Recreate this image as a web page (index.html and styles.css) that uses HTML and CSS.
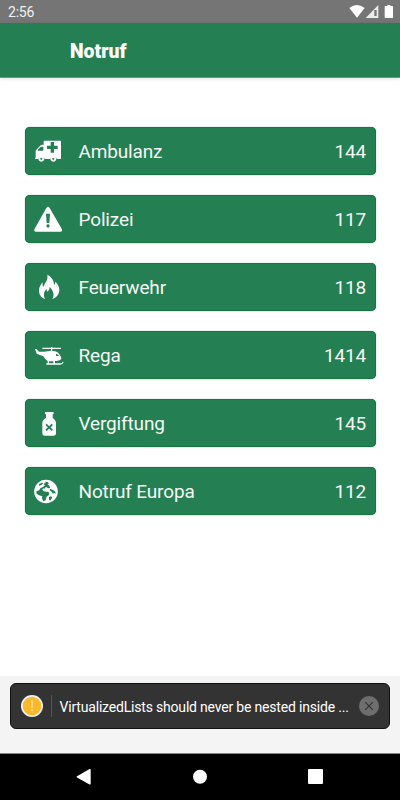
FILE: index.html
```
<!DOCTYPE html>
<html lang="de">
<head>
<meta charset="utf-8">
<title>Notruf</title>
<link rel="stylesheet" href="styles.css">
</head>
<body>
<div class="statusbar">
  <span class="clock">2:56</span>
  <svg class="status-icons" width="50" height="23" viewBox="440 0 150 69" fill="#fff">
    <path d="M447 24Q470 6 493 24L470 53Z"/>
    <path d="M534 15V54H496Z" fill="#ececec"/><path d="M522 30H529V48H522Z" fill="#757575"/>
    <path d="M561 15H570V18H576Q578 18 578 20V52Q578 54 576 54H555Q553 54 553 52V20Q553 18 555 18H561Z"/>
  </svg>
</div>
<header class="header"><h1>Notruf</h1></header>
<main class="list">
  <div class="row">
    <svg class="icon" viewBox="15 21 120 144">
      <path fill-rule="evenodd" d="M73 62H121Q123 62 123 64V115Q123 117 121 117H111A11 11 0 0 0 90 117H75A11 11 0 0 0 54 117H47Q45 117 45 115L47 112V94Q47 91 49 89L62 76Q64 74 67 74H71V64Q71 62 73 62ZM54 92H70V80H65Q63 80 61 82L54 89ZM92 66V77H81V87H92V98H102V87H113V77H102V66Z"/>
      <path fill-rule="evenodd" d="M64 107A9 9 0 1 0 64.100 107ZM64 113A3 3 0 1 1 63.900 113ZM100 107A9 9 0 1 0 100.100 107ZM100 113A3 3 0 1 1 99.900 113Z"/>
    </svg>
    <span class="name">Ambulanz</span><span class="number">144</span>
  </div>
  <div class="row">
    <svg class="icon" viewBox="15 21 120 144">
      <path fill-rule="evenodd" d="M79 60Q84 53 89 60L125 122Q129 130 121 131H48Q40 130 44 122ZM78 77L80 105H88L90 77ZM84 109A5 5 0 1 0 84.100 109Z"/>
    </svg>
    <span class="name">Polizei</span><span class="number">117</span>
  </div>
  <div class="row">
    <svg class="icon" viewBox="15 21 120 144">
      <path d="M82 56C96 64 102 73 102 87Q106 84 106 77C113 83 118 92 118 101C118 115 109 125 97 129C104 117 101 106 89 92C89 99 86 103 83 107Q79 104 80 98C71 107 70 117 75 129C64 125 57 116 57 104C57 93 62 86 68 79Q66 88 70 93C74 80 85 74 82 56Z"/>
    </svg>
    <span class="name">Feuerwehr</span><span class="number">118</span>
  </div>
  <div class="row">
    <svg class="icon" viewBox="15 21 120 144">
      <path fill-rule="evenodd" d="M67 71H93V69H97V71H123V75H97V81H102Q113 82 121 95Q126 101 123 106Q120 110 111 111H105V118H121Q126 118 128 113L131 115Q128 122 121 122H79V118H83V111Q75 107 70 97L50 89L45 75H49L57 83L73 83L93 80V75H67ZM108 89V96H117Q113 90 108 89ZM87 112V118H100V112Z"/>
    </svg>
    <span class="name">Rega</span><span class="number">1414</span>
  </div>
  <div class="row">
    <svg class="icon" viewBox="15 21 120 144">
      <path d="M77 60H99Q101 60 101 62V65Q101 67 98 67V77L104 83Q108 87 108 92V123Q108 131 100 131H75Q67 131 67 123V92Q67 87 71 83L78 77V67Q75 67 75 65V62Q75 60 77 60Z"/>
      <path class="mark" d="M78 97L97 115M97 97L78 115"/>
    </svg>
    <span class="name">Vergiftung</span><span class="number">145</span>
  </div>
  <div class="row">
    <svg class="icon" viewBox="15 21 120 144">
      <circle cx="78" cy="94.500" r="35.500"/>
      <path class="land" d="M75 65L83 66L87 71L82 73L87 76L91 84L84 85L78 80L73 87L66 88L71 94L80 95L85 93L88 99L86 106L79 111L77 121L70 124L66 115L67 109L57 106L50 101L49 94L58 91L61 85L70 80L75 76L71 73Z"/>
      <path class="land" d="M57 73L65 68L70 70L64 75L57 77ZM90 86L99 90L106 95L107 102L102 98L99 102L95 95L89 91ZM87 111L93 109L97 112L92 121L87 120Z"/>
      <path d="M70 85L79 88L89 97L85 97L76 91L69 89ZM72 67L76 66L77 70L73 70Z"/>
    </svg>
    <span class="name">Notruf Europa</span><span class="number">112</span>
  </div>
</main>
<footer class="footer">
  <div class="toast">
    <svg class="warning" width="22" height="22" viewBox="0 0 22 22"><circle cx="11" cy="11" r="11" fill="#f4f4f4"/><circle cx="11" cy="11" r="9.300" fill="#fbb829"/><path d="M10.300 5.500H11.700L11.400 13H10.600ZM10.300 14.600H11.700V16H10.300Z" fill="#fff2d8"/></svg>
    <span class="divider"></span>
    <span class="message">VirtualizedLists should never be nested inside ...</span>
    <svg class="close" width="20" height="20" viewBox="0 0 20 20"><circle cx="10" cy="10" r="10" fill="#6e6e6e"/><path d="M6.200 6.200L13.800 13.800M13.800 6.200L6.200 13.800" stroke="#333" stroke-width="1.200"/></svg>
  </div>
</footer>
<nav class="navbar">
  <svg width="400" height="46" viewBox="0 754 400 46" fill="#fff"><path d="M77 776.200L89.500 769Q90.700 768.500 90.700 770V783.500Q90.700 785 89.500 784.400L77 777.500Q76 776.800 77 776.200Z"/><circle cx="200" cy="776.700" r="7"/><rect x="308" y="769" width="15" height="15" rx="1"/></svg>
</nav>
</body>
</html>
```
FILE: styles.css
```
* { box-sizing: border-box; }
body {
  margin: 0;
  width: 400px;
  height: 800px;
  display: flex;
  flex-direction: column;
  overflow: hidden;
  background: #fff;
  color: #fff;
  font-family: Roboto, sans-serif;
}
svg { display: block; flex: none; }
.statusbar {
  height: 23px;
  flex: none;
  display: flex;
  justify-content: space-between;
  padding: 0 3px 0 8px;
  background: #757575;
}
.clock { font-size: 14px; letter-spacing: -.2px; line-height: 25px; color: #f1f1f1; }
.header {
  height: 55px;
  flex: none;
  padding-left: 70px;
  background: #247f52;
  border-bottom: 1px solid #5c9f7c;
  box-shadow: 0 1px 4px rgba(0, 0, 0, .12);
}
.header h1 { margin: 0; font-size: 19.400px; line-height: 58px; font-weight: 900; }
.list {
  flex: 1;
  padding: 49px 24.500px 0 25px;
  display: flex;
  flex-direction: column;
  gap: 20px;
}
.row {
  height: 48px;
  flex: none;
  display: flex;
  align-items: center;
  padding-right: 9.500px;
  border-radius: 5px;
  background: #247f52;
  box-shadow: inset 0 0 0 1px #13783f, 0 0 1px #247f52;
  font-size: 19px;
  letter-spacing: -.15px;
  line-height: 46px;
  color: #f4f8f6;
}
.name, .number { padding-top: 2px; }
.icon { width: 40px; height: 48px; margin-right: 13.500px; fill: #fff; }
.land { fill: #247f52; }
.mark { stroke: #247f52; stroke-width: 5.500; }
.number { margin-left: auto; }
.footer {
  height: 78px;
  flex: none;
  padding: 7px 10px 0;
  background: #f4f4f4;
  border-bottom: 1px solid #858585;
}
.toast {
  height: 46px;
  display: flex;
  align-items: center;
  padding: 0 10px;
  border: 1px solid #111;
  border-radius: 6px;
  background: #333;
}
.divider { width: 1px; height: 22px; margin: 0 7.500px 0 8px; background: #555; }
.message { flex: 1; padding-top: 2px; font-size: 14px; letter-spacing: -.19px; line-height: 44px; white-space: nowrap; }
.navbar { height: 46px; flex: none; background: #000; }
```
